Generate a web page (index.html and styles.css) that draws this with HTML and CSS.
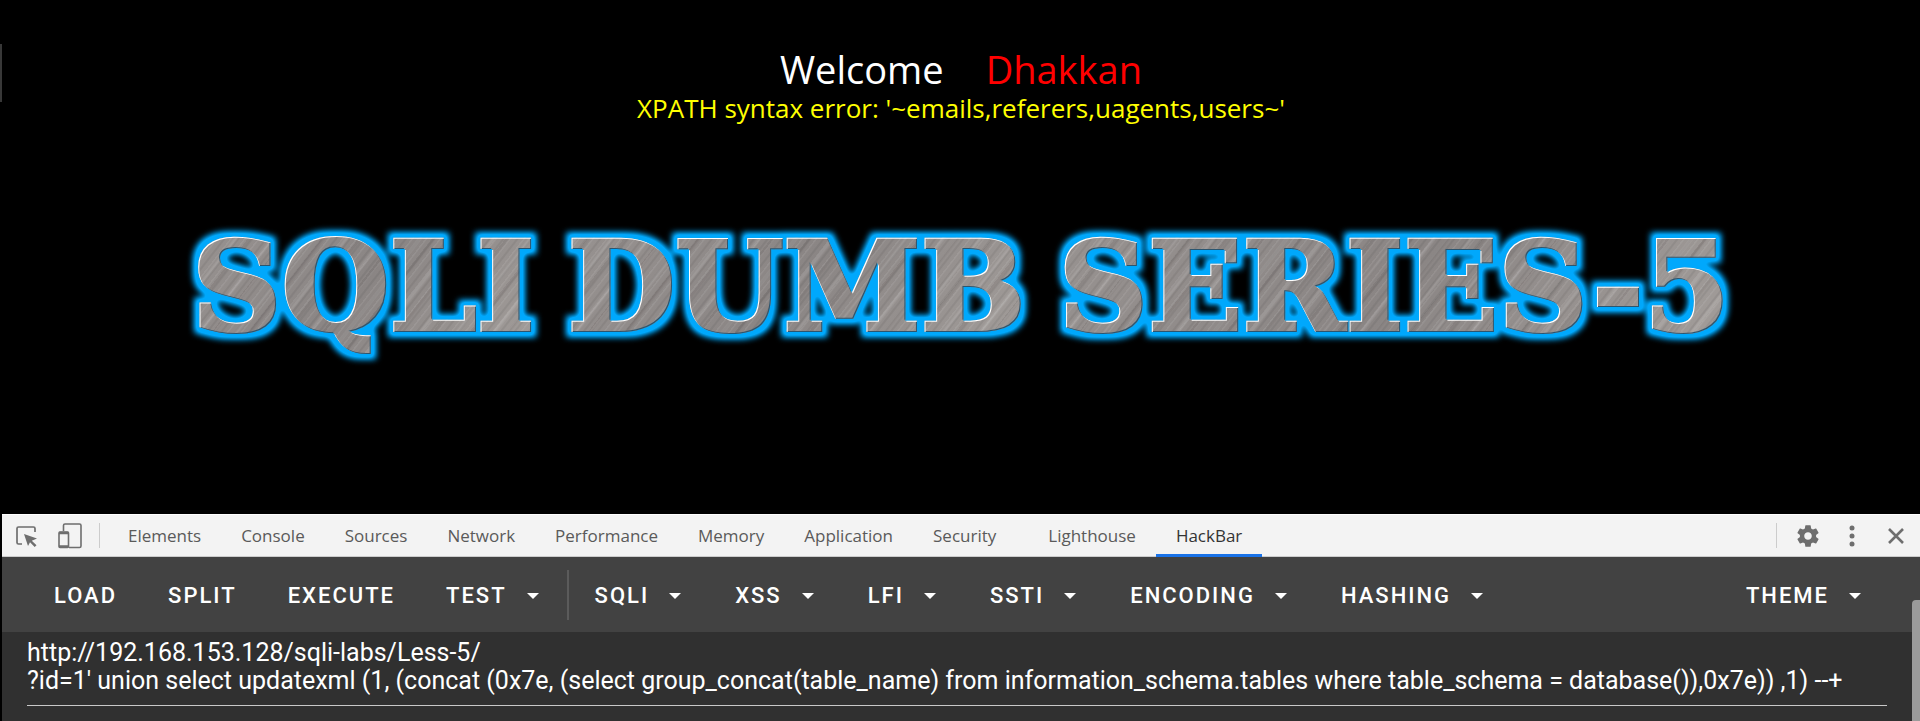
FILE: index.html
```
<!DOCTYPE html>
<html lang="en">
<head>
<meta charset="utf-8">
<title>Less-5</title>
<link rel="stylesheet" href="styles.css">
</head>
<body>
<svg class="defs" width="0" height="0" aria-hidden="true">
  <filter id="metal" x="-10%" y="-20%" width="120%" height="140%" color-interpolation-filters="sRGB">
    <feMorphology in="SourceAlpha" operator="dilate" radius="5" result="fat"/>
    <feGaussianBlur in="fat" stdDeviation="3" result="soft"/>
    <feComponentTransfer in="soft" result="halo"><feFuncA type="linear" slope="1.4"/></feComponentTransfer>
    <feFlood flood-color="#00a8fc"/>
    <feComposite in2="halo" operator="in" result="glow"/>
    <feOffset in="SourceAlpha" dx="1" dy="1" result="down"/>
    <feFlood flood-color="#ffffff"/>
    <feComposite in2="SourceAlpha" operator="in"/>
    <feComposite in2="down" operator="out" result="light"/>
    <feOffset in="SourceAlpha" dx="-1" dy="-1" result="up"/>
    <feFlood flood-color="#2b5670"/>
    <feComposite in2="SourceAlpha" operator="in"/>
    <feComposite in2="up" operator="out" result="dark"/>
    <feMerge>
      <feMergeNode in="glow"/>
      <feMergeNode in="SourceGraphic"/>
      <feMergeNode in="dark"/>
      <feMergeNode in="light"/>
    </feMerge>
  </filter>
</svg>

<main class="page">
  <span class="edge-mark"></span>
  <p class="welcome"><span>Welcome</span><span class="name">Dhakkan</span></p>
  <p class="error">XPATH syntax error: '~emails,referers,uagents,users~'</p>
  <h1 class="banner"><span>SQLI</span> <span>DUMB</span> <span>SERIES-5</span></h1>
</main>

<section class="devtools">
  <nav class="tabs">
    <button class="icon-btn" aria-label="Inspect element">
      <svg width="24" height="24" viewBox="0 0 24 24"><path d="M20 8V4.500Q20 3 18.500 3H3.500Q2 3 2 4.500V18.500Q2 20 3.500 20H7" fill="none" stroke="#6e6e6e" stroke-width="1.700"/><path d="M9 10l13 4.500-5.200 2.200 4.700 4.600-1.800 1.700-4.700-4.700L13 22z" fill="#6e6e6e"/></svg>
    </button>
    <button class="icon-btn device" aria-label="Toggle device toolbar">
      <svg width="26" height="28" viewBox="0 0 26 28"><path d="M7.500 9V3.500Q7.500 2 9 2H23.500Q25 2 25 3.500V24Q25 25.500 23.500 25.500H13" fill="none" stroke="#6e6e6e" stroke-width="1.600"/><rect x="3" y="10" width="9.500" height="15.500" rx="1" fill="none" stroke="#6e6e6e" stroke-width="1.600"/><path d="M3 11h9.500M3 24.500h9.500" stroke="#6e6e6e" stroke-width="2.400"/></svg>
    </button>
    <span class="rule"></span>
    <div class="tab-list">
      <button class="tab">Elements</button>
      <button class="tab">Console</button>
      <button class="tab">Sources</button>
      <button class="tab">Network</button>
      <button class="tab">Performance</button>
      <button class="tab">Memory</button>
      <button class="tab">Application</button>
      <button class="tab">Security</button>
      <button class="tab spaced">Lighthouse</button>
      <button class="tab active">HackBar</button>
    </div>
    <div class="tab-tools">
      <span class="rule"></span>
      <button class="icon-btn" aria-label="Settings">
        <svg width="26" height="26" viewBox="0 0 24 24"><path fill="#6e6e6e" d="M19.430 12.980c.040-.320.070-.640.070-.980s-.030-.660-.070-.980l2.110-1.650c.190-.150.240-.420.120-.640l-2-3.460c-.120-.220-.390-.300-.610-.220l-2.490 1c-.520-.400-1.080-.730-1.690-.980l-.380-2.650C14.460 2.180 14.250 2 14 2h-4c-.250 0-.460.180-.490.420l-.380 2.650c-.610.250-1.170.590-1.690.980l-2.490-1c-.230-.090-.490 0-.610.220l-2 3.460c-.130.220-.070.490.120.640l2.110 1.650c-.040.320-.070.650-.070.980s.030.660.070.980l-2.110 1.650c-.190.150-.240.420-.120.640l2 3.460c.120.220.390.300.610.220l2.490-1c.520.400 1.080.730 1.690.980l.380 2.650c.030.240.240.420.490.420h4c.250 0 .460-.180.490-.420l.380-2.650c.610-.250 1.170-.590 1.690-.980l2.490 1c.230.090.490 0 .610-.220l2-3.460c.120-.220.070-.490-.120-.640l-2.110-1.650zM12 15.500c-1.930 0-3.500-1.570-3.500-3.500s1.570-3.500 3.500-3.500 3.500 1.570 3.500 3.500-1.570 3.500-3.500 3.500z"/></svg>
      </button>
      <button class="icon-btn" aria-label="More options">
        <svg width="26" height="26" viewBox="0 0 26 26"><g fill="#6e6e6e"><circle cx="13" cy="5" r="2.500"/><circle cx="13" cy="13" r="2.500"/><circle cx="13" cy="21" r="2.500"/></g></svg>
      </button>
      <button class="icon-btn" aria-label="Close">
        <svg width="26" height="26" viewBox="0 0 26 26"><path d="M6 6l14 14M20 6L6 20" stroke="#6e6e6e" stroke-width="2.600"/></svg>
      </button>
    </div>
  </nav>

  <div class="toolbar">
    <button class="cmd">LOAD</button>
    <button class="cmd">SPLIT</button>
    <button class="cmd">EXECUTE</button>
    <button class="cmd menu">TEST</button>
    <span class="divider"></span>
    <button class="cmd menu">SQLI</button>
    <button class="cmd menu">XSS</button>
    <button class="cmd menu">LFI</button>
    <button class="cmd menu">SSTI</button>
    <button class="cmd menu">ENCODING</button>
    <button class="cmd menu">HASHING</button>
    <button class="cmd menu theme">THEME</button>
  </div>

  <div class="editor">
    <textarea class="query" rows="2" aria-label="URL" spellcheck="false">http://192.168.153.128/sqli-labs/Less-5/
?id=1' union select updatexml (1, (concat (0x7e, (select group_concat(table_name) from information_schema.tables where table_schema = database()),0x7e)) ,1) --+</textarea>
  </div>
  <span class="scroll-thumb"></span>
</section>
</body>
</html>
```

FILE: styles.css
```
* { box-sizing: border-box; }

body {
  margin: 0;
  min-height: 100vh;
  display: flex;
  flex-direction: column;
  background: #000;
  overflow: hidden;
}

button {
  border: 0;
  padding: 0;
  background: none;
  font: inherit;
  color: inherit;
}

.defs { position: absolute; }

.page {
  flex: 1;
  position: relative;
  padding: 43px 0 0 2px;
  text-align: center;
  font-family: "Open Sans", "Noto Sans", sans-serif;
}

.edge-mark {
  position: absolute;
  left: 0;
  top: 44px;
  width: 2px;
  height: 58px;
  background: #383838;
}

.welcome {
  display: flex;
  justify-content: center;
  gap: 42px;
  margin: 0;
  font-size: 38px;
  line-height: 52px;
  color: #fff;
}

.name { color: #f00; }

.error {
  margin: 0;
  font-size: 26px;
  line-height: 26px;
  color: #ff0;
}

.banner {
  display: flex;
  justify-content: center;
  gap: 33px;
  margin: 95px 0 0;
  font-family: "DejaVu Serif", serif;
  font-weight: 700;
  font-size: 124px;
  line-height: 142px;
  filter: url(#metal);
}

.banner span {
  color: transparent;
  -webkit-text-stroke: 4px transparent;
  background:
    repeating-linear-gradient(128deg, rgba(255,255,255,.08) 0 1px, transparent 2px 5px, rgba(0,0,0,.06) 6px 7px, transparent 8px 11px),
    repeating-linear-gradient(128deg, rgba(60,50,50,.1) 0 2px, transparent 4px 17px, rgba(255,255,255,.12) 19px 20px, transparent 22px 29px),
    linear-gradient(128deg, #989391, #8a8584 50%, #a39e9b);
  -webkit-background-clip: text;
  background-clip: text;
}

.devtools {
  position: relative;
  margin-left: 2px;
  background: #303030;
}

.tabs {
  display: flex;
  align-items: center;
  height: 43px;
  padding: 0 11px 0 13px;
  background: #f3f3f3;
  border-top: 1px solid #fff;
  border-bottom: 1px solid #ccc;
  font-family: "Open Sans", "Noto Sans", sans-serif;
  font-size: 17px;
  color: #5a5a5a;
}

.icon-btn { display: flex; }

.device { margin-left: 17px; }

.rule {
  width: 1px;
  height: 25px;
  background: #ccc;
}

.tabs > .rule { margin-left: 17px; }

.tab-list {
  display: flex;
  align-self: stretch;
  margin: 0 auto -1px 8px;
}

.tab {
  padding: 2px 20px 0;
  border-bottom: 3px solid transparent;
}

.spaced { margin-left: 12px; }

.active {
  color: #333;
  border-color: #1a73e8;
}

.tab-tools {
  display: flex;
  align-items: center;
  gap: 18px;
}

.toolbar {
  display: flex;
  align-items: center;
  height: 75px;
  padding: 0 26px;
  background: #424242;
  color: #fff;
  font-family: Roboto, sans-serif;
  font-weight: 500;
  font-size: 22px;
  letter-spacing: 2px;
}

.cmd {
  display: flex;
  align-items: center;
  height: 50px;
  padding: 2px 25px 0 26px;
  letter-spacing: inherit;
}

.menu { padding-right: 28px; }

.menu::after {
  content: "";
  margin-left: 20px;
  border: 6px solid transparent;
  border-top-color: #fff;
  border-bottom: 0;
}

.divider {
  width: 2px;
  height: 50px;
  background: #5b5b5b;
}

.theme { margin-left: auto; padding-right: 33px; }

.editor { padding: 7px 33px 15px 25px; }

.query {
  display: block;
  width: 100%;
  padding: 0 0 10px;
  border: 0;
  border-bottom: 1px solid #c8c8c8;
  background: transparent;
  color: #fff;
  font-family: Roboto, sans-serif;
  font-size: 25px;
  line-height: 28px;
  resize: none;
  overflow: hidden;
  outline: 0;
}

.scroll-thumb {
  position: absolute;
  right: 0;
  top: 86px;
  bottom: 0;
  width: 8px;
  border-radius: 4px 0 0 0;
  background: #9b9b9b;
}
```
